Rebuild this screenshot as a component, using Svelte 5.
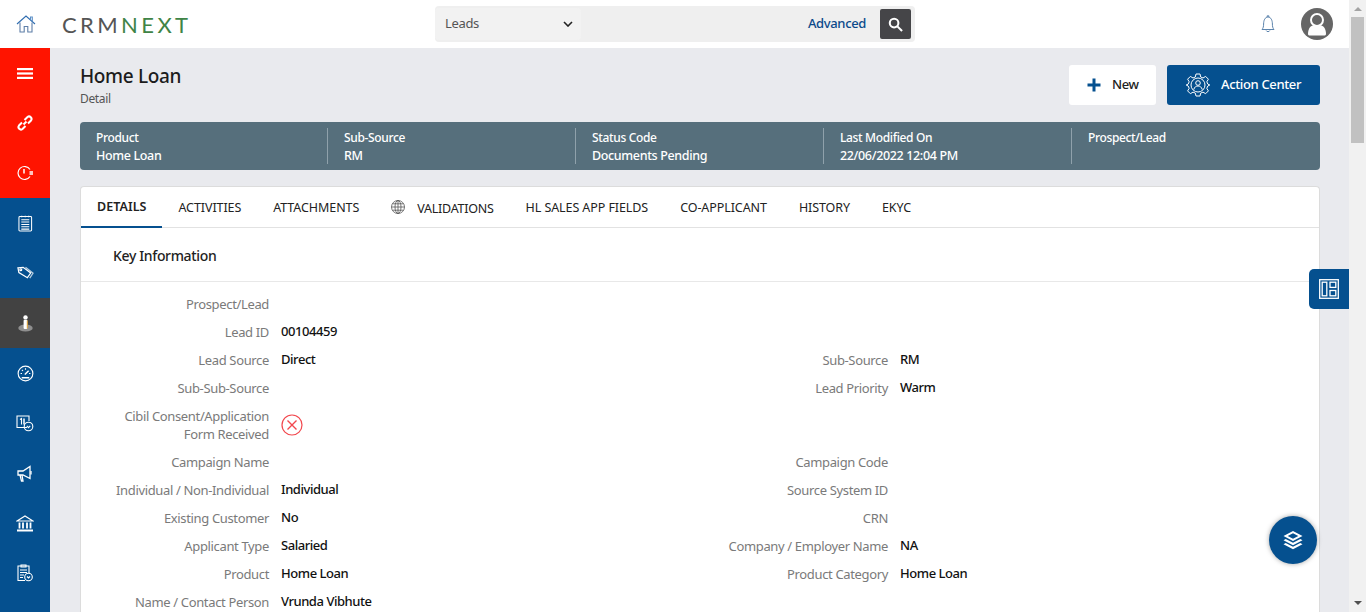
<script>
  const summary = [
    { label: 'Product', value: 'Home Loan' },
    { label: 'Sub-Source', value: 'RM' },
    { label: 'Status Code', value: 'Documents Pending' },
    { label: 'Last Modified On', value: '22/06/2022 12:04 PM' },
    { label: 'Prospect/Lead', value: '' },
  ]
  const tabs = ['DETAILS', 'ACTIVITIES', 'ATTACHMENTS', 'VALIDATIONS', 'HL SALES APP FIELDS', 'CO-APPLICANT', 'HISTORY', 'EKYC']
  const rows = [
    ['Prospect/Lead', '', '', ''],
    ['Lead ID', '00104459', '', ''],
    ['Lead Source', 'Direct', 'Sub-Source', 'RM'],
    ['Sub-Sub-Source', '', 'Lead Priority', 'Warm'],
    ['Cibil Consent/Application Form Received', 'x', '', ''],
    ['Campaign Name', '', 'Campaign Code', ''],
    ['Individual / Non-Individual', 'Individual', 'Source System ID', ''],
    ['Existing Customer', 'No', 'CRN', ''],
    ['Applicant Type', 'Salaried', 'Company / Employer Name', 'NA'],
    ['Product', 'Home Loan', 'Product Category', 'Home Loan'],
    ['Name / Contact Person', 'Vrunda Vibhute', '', ''],
  ]
  const nav = ['menu', 'link', 'alarm', 'notes', 'tag', 'person', 'gauge', 'calendar', 'megaphone', 'bank', 'report']
</script>

<div class="page">
  <div class="viewport">
    <header class="topbar">
      <div class="brand">
        <svg class="home" viewBox="0 0 20 20" width="20" height="20" fill="none" stroke="#2f6db0" stroke-width="1.1">
          <path d="M1 10 L10 2 L19 10" />
          <path d="M14.5 5.5V3h1.8v4.2" stroke="#5b8fc7" />
          <path d="M4 8.5V18h4.2v-5.5h3.6V18H16V8.5" stroke="#5f7fa8" />
        </svg>
        <div class="logo">CRM<span>NEXT</span></div>
      </div>
      <div class="search">
        <div class="module">
          <span>Leads</span>
          <svg viewBox="0 0 10 6" width="10" height="6" fill="none" stroke="#222" stroke-width="1.6"><path d="M1 1l4 4 4-4" /></svg>
        </div>
        <span class="advanced">Advanced</span>
        <button class="go" type="button" aria-label="Search">
          <svg viewBox="0 0 16 16" width="15" height="15" fill="none" stroke="#fff" stroke-width="2.2"><circle cx="6.5" cy="6.5" r="4.6" /><path d="M10 10l5 5" /></svg>
        </button>
      </div>
      <div class="user">
        <svg viewBox="0 0 18 20" width="18" height="20" fill="none" stroke="#5c84ad" stroke-width="1">
          <path d="M3 15.5c1.2-1.4 1.6-3 1.6-5.5C4.600 6.500 6 3 9 3s4.400 3.500 4.400 7c0 2.500.4 4.100 1.600 5.500z" />
          <path d="M7.200 16.500c.4 1.500 3.200 1.500 3.600 0" />
          <path d="M8.200 3V1.800h1.600V3" />
        </svg>
        <svg viewBox="0 0 32 32" width="32" height="32">
          <circle cx="16" cy="16" r="16" fill="#666" />
          <circle cx="16" cy="12" r="6" fill="none" stroke="#fff" stroke-width="2" />
          <path d="M7 26c0-6 3-8.500 5.500-8.500h7C22 17.500 25 20 25 26c0 1-1 1.500-2 1.500H9C8 27.500 7 27 7 26z" fill="#fff" />
        </svg>
      </div>
    </header>

    <div class="body">
      <nav class="sidebar">
        {#each nav as item, i}
          <div class="nav-item" class:red={i < 3} class:active={item === 'person'}>
            {#if item === 'menu'}
              <svg viewBox="0 0 16 11" width="16" height="11" fill="#fff"><rect y="0" width="16" height="2.200" /><rect y="4.400" width="16" height="2.200" /><rect y="8.800" width="16" height="2.200" /></svg>
            {:else if item === 'link'}
              <svg viewBox="0 0 18 18" width="18" height="18" fill="none" stroke="#fff" stroke-width="2"><path d="M7.500 10.500l3-3" /><path d="M6 8.500L3 11.500a2.500 2.500 0 0 0 3.500 3.500l3-3" /><path d="M12 9.500l3-3A2.500 2.500 0 0 0 11.500 3l-3 3" /></svg>
            {:else if item === 'alarm'}
              <svg viewBox="0 0 18 16" width="18" height="16" fill="none" stroke="#fff" stroke-width="1.200"><path d="M14 11.500A6.500 6.500 0 1 1 14 4.500" /><path d="M8 4v4.500" stroke-width="1.500" /><rect x="13.500" y="6" width="3.500" height="4" fill="#fff" stroke="none" opacity=".75" /></svg>
            {:else if item === 'notes'}
              <svg viewBox="0 0 16 18" width="15" height="17" fill="none" stroke="#fff" stroke-width="1.100"><rect x="1" y="1.500" width="13.500" height="15.500" rx="1" /><path d="M4 .8v1.500M7.700 .8v1.500M11.400 .8v1.500" /><path d="M3.500 5h8.500M3.500 7.500h8.500M3.500 10h8.500M3.500 12.500h8.500M3.500 15h8.500" /></svg>
            {:else if item === 'tag'}
              <svg viewBox="0 0 18 14" width="17" height="14" fill="none" stroke="#fff" stroke-width="1.300"><path d="M1 1.500L6.500 1 14.500 7 11 12 2 6.500z" /><circle cx="4" cy="3.500" r="1" /><path d="M9 1l8 6.200-3.500 5.300" stroke-opacity=".7" /></svg>
            {:else if item === 'person'}
              <svg viewBox="0 0 15 17" width="15" height="17"><ellipse cx="7.500" cy="13" rx="7.200" ry="3.600" fill="#8f8f8f" /><circle cx="7.500" cy="2.400" r="2.200" fill="#fff" /><rect x="5.600" y="4.800" width="3.800" height="9.200" rx="1" fill="#fff" /><rect x="8.800" y="5.500" width="1" height="8" fill="#e0a030" /></svg>
            {:else if item === 'gauge'}
              <svg viewBox="0 0 18 18" width="17" height="17" fill="none" stroke="#fff" stroke-width="1.200"><circle cx="9" cy="9" r="7.800" /><path d="M9 3.500v1.500M3.800 9h1.500M12.700 9h1.500M5.300 5.300l1 1" /><path d="M8.300 10l4-4" stroke-width="1.500" /><path d="M5 13.500h8" stroke-width="1.600" /></svg>
            {:else if item === 'calendar'}
              <svg viewBox="0 0 18 17" width="18" height="17" fill="none" stroke="#fff" stroke-width="1.100"><path d="M11 12.500H1V1h12v5" /><path d="M4 4.500l1.500-1v6" /><path d="M8 3.500v6" stroke-width="1.500" /><circle cx="12.500" cy="11.500" r="4.300" /><path d="M10.800 10.800l1.700 1.800 1.700-1.800" /></svg>
            {:else if item === 'megaphone'}
              <svg viewBox="0 0 16 17" width="16" height="17" fill="none" stroke="#fff" stroke-width="1.300"><path d="M1 6h5l7-4.500v12L6 10H1z" /><path d="M3 10l1.500 6H6l-1-6" /><path d="M14 6v3.500" /></svg>
            {:else if item === 'bank'}
              <svg viewBox="0 0 18 17" width="18" height="17" fill="none" stroke="#fff" stroke-width="1.200"><path d="M1 6L9 1l8 5z" /><path d="M3.500 7.500v6M7 7.500v6M11 7.500v6M14.500 7.500v6" stroke-width="1.800" /><path d="M1 15.500h16" stroke-width="2" /></svg>
            {:else}
              <svg viewBox="0 0 16 18" width="16" height="18" fill="none" stroke="#fff" stroke-width="1.100"><path d="M8 16.500H1V2h11v7" /><path d="M4 1v2h5V1z" /><path d="M3 6h7M3 8.500h7M3 11h4M3 13.500h3" /><circle cx="11.500" cy="13" r="3.800" /><path d="M10 12.500l1.500 1.500 1.500-1.500" /></svg>
            {/if}
          </div>
        {/each}
      </nav>

      <main class="content">
        <div class="title-row">
          <div>
            <h1>Home Loan</h1>
            <p>Detail</p>
          </div>
          <div class="actions">
            <button class="new" type="button">
              <svg viewBox="0 0 14 14" width="14" height="14" fill="#05508f"><rect x="5.500" y="0.500" width="3" height="13" /><rect x="0.500" y="5.500" width="13" height="3" /></svg>
              <span>New</span>
            </button>
            <button class="center" type="button">
              <svg viewBox="0 0 24 24" width="24" height="24" fill="none" stroke="#fff" stroke-width="1">
                <path d="M10 1h4l.7 3 2.300 1 2.600-1.600 2.800 2.800L20.800 8.800l1 2.300 2 .9v0l-2 1-1 2.300 1.600 2.600-2.800 2.800-2.600-1.600-2.300 1-.7 2.900h-4l-.7-2.900-2.300-1-2.600 1.600-2.800-2.800 1.600-2.600-1-2.300-2-1 2-.9 1-2.300L1.600 6.200l2.800-2.800L7 5l2.300-1z" />
                <circle cx="12" cy="12" r="7" />
                <circle cx="12" cy="10" r="2.300" />
                <path d="M7.800 16.500c.6-2.500 2.300-3.500 4.200-3.500s3.600 1 4.200 3.500" />
              </svg>
              <span>Action Center</span>
            </button>
          </div>
        </div>

        <section class="strip">
          {#each summary as cell}
            <div class="cell">
              <span class="cell-label">{cell.label}</span>
              <span class="cell-value">{cell.value}</span>
            </div>
          {/each}
        </section>

        <section class="card">
          <div class="tabs">
            {#each tabs as tab, i}
              <div class="tab" class:current={i === 0}>
                {#if tab === 'VALIDATIONS'}
                  <svg viewBox="0 0 14 14" width="14" height="14" fill="none" stroke="#555" stroke-width=".8"><circle cx="7" cy="7" r="6.500" /><ellipse cx="7" cy="7" rx="3" ry="6.500" /><path d="M7 .5v13M.5 7h13M1.500 3.800h11M1.500 10.200h11" /></svg>
                  <span class="low">{tab}</span>
                {:else}
                  <span>{tab}</span>
                {/if}
              </div>
            {/each}
          </div>
          <h2>Key Information</h2>
          <div class="fields">
            {#each rows as row}
              <div class="field">
                <div class="label">{row[0]}</div>
                <div class="value">
                  {#if row[1] === 'x'}
                    <svg viewBox="0 0 22 22" width="22" height="22" fill="none" stroke="#f2474d" stroke-width="1.200"><circle cx="11" cy="11" r="10" /><path d="M6.500 6.500l9 9M15.500 6.500l-9 9" stroke-width="1.400" /></svg>
                  {:else}
                    <span>{row[1]}</span>
                  {/if}
                </div>
              </div>
              <div class="field">
                <div class="label">{row[2]}</div>
                <div class="value"><span>{row[3]}</span></div>
              </div>
            {/each}
          </div>
        </section>
      </main>
    </div>

    <button class="layout-tab" type="button" aria-label="Layout">
      <svg viewBox="0 0 20 20" width="20" height="20" fill="none" stroke="#fff" stroke-width="1.300"><rect x=".7" y=".7" width="18.600" height="18.600" /><rect x="3.200" y="3.200" width="4.600" height="13.600" /><rect x="11" y="3.200" width="5.800" height="5.200" /><rect x="11" y="11.500" width="5.800" height="5.300" /></svg>
    </button>
    <button class="layers" type="button" aria-label="Layers">
      <svg viewBox="0 0 22 20" width="22" height="20" fill="#fff">
        <path d="M11 1l9.500 5L11 11 1.500 6zM11 3.200L5.700 6 11 8.800 16.300 6z" fill-rule="evenodd" />
        <path d="M3.700 9L1.500 10.200 11 15.200l9.500-5L18.300 9 11 12.800z" />
        <path d="M3.700 13L1.500 14.200 11 19.200l9.500-5L18.300 13 11 16.800z" />
      </svg>
    </button>
  </div>

  <div class="scrollbar">
    <div class="arrow up"></div>
    <div class="thumb"></div>
    <div class="arrow down"></div>
  </div>
</div>

<style>
  :global(body) {
    margin: 0;
    overflow: hidden;
  }

  .page {
    display: flex;
    width: 1366px;
    height: 612px;
    overflow: hidden;
    font-family: 'Noto Sans', 'Liberation Sans', sans-serif;
    font-size: 13px;
    letter-spacing: -0.35px;
    color: #111;
  }

  .viewport {
    position: relative;
    flex: 1;
    min-width: 0;
    display: flex;
    flex-direction: column;
  }

  .topbar {
    flex: none;
    height: 48px;
    display: grid;
    grid-template-columns: 435px 480px 1fr;
    align-items: center;
    background: #fff;
  }

  .brand {
    display: flex;
    align-items: center;
    padding-left: 16px;
    gap: 26px;
  }

  .logo {
    font-family: Lato, sans-serif;
    font-size: 22px;
    letter-spacing: 3.4px;
    color: #555;
  }

  .logo span {
    color: #3f8446;
  }

  .search {
    height: 36px;
    display: flex;
    align-items: center;
    background: #efefef;
    border-radius: 4px;
  }

  .module {
    width: 146px;
    height: 32px;
    box-sizing: border-box;
    padding: 0 8px 0 10px;
    display: flex;
    align-items: center;
    justify-content: space-between;
    background: #f2f2f2;
    border-radius: 4px;
    color: #555;
  }

  .module span {
    padding-bottom: 2px;
  }

  .advanced {
    margin-left: auto;
    margin-right: 14px;
    padding-bottom: 2px;
    color: #0b4a8a;
    font-weight: 500;
  }

  .go {
    width: 31px;
    height: 30px;
    margin-right: 4px;
    padding: 0;
    display: grid;
    place-items: center;
    border: 0;
    border-radius: 2px;
    background: #454548;
  }

  .user {
    display: flex;
    align-items: center;
    justify-content: flex-end;
    gap: 24px;
    padding-right: 16px;
  }

  .body {
    flex: 1;
    min-height: 0;
    display: flex;
  }

  .sidebar {
    flex: none;
    width: 50px;
    background: #05508f;
  }

  .nav-item {
    height: 50px;
    display: grid;
    place-items: center;
  }

  .nav-item.red {
    background: #ff1400;
  }

  .nav-item.active {
    background: #424242;
  }

  .content {
    flex: 1;
    min-width: 0;
    box-sizing: border-box;
    padding: 17px 29px 0 30px;
    overflow: hidden;
    background: #e9eaee;
  }

  .title-row {
    display: flex;
    justify-content: space-between;
    height: 57px;
  }

  h1 {
    margin: 0;
    font-size: 19px;
    line-height: 22px;
    font-weight: 500;
    color: #1c1c1c;
  }

  .title-row p {
    margin: 3px 0 0;
    font-size: 12px;
    line-height: 17px;
    color: #555;
  }

  .actions {
    display: flex;
    gap: 11px;
  }

  .actions button {
    height: 40px;
    display: flex;
    align-items: center;
    border: 0;
    border-radius: 3px;
    font: inherit;
    letter-spacing: inherit;
    font-weight: 500;
  }

  .actions button span {
    padding-bottom: 2px;
  }

  .new {
    width: 87px;
    padding: 0 0 0 18px;
    gap: 11px;
    background: #fff;
    color: #222;
  }

  .center {
    width: 153px;
    padding: 0 0 0 19px;
    gap: 11px;
    background: #05508f;
    color: #fff;
  }

  .strip {
    height: 48px;
    display: grid;
    grid-template-columns: repeat(5, 1fr);
    align-items: center;
    border-radius: 4px;
    background: #566f7c;
    color: #fff;
  }

  .cell {
    height: 36px;
    box-sizing: border-box;
    padding: 1px 0 0 16px;
    display: flex;
    flex-direction: column;
    border-right: 1px solid #8fa1ab;
    line-height: 18px;
  }

  .cell:last-child {
    border-right: 0;
  }

  .cell-label,
  .cell-value {
    min-height: 18px;
    font-size: 12.500px;
    font-weight: 500;
  }

  .cell-label {
    font-size: 12px;
  }

  .card {
    margin-top: 16px;
    background: #fff;
    border: 1px solid #dcdcdc;
    border-bottom: 0;
    border-radius: 4px 4px 0 0;
  }

  .tabs {
    height: 40px;
    display: flex;
    border-bottom: 1px solid #e2e2e2;
  }

  .tab {
    height: 40px;
    padding: 0 16px;
    display: flex;
    align-items: center;
    gap: 12px;
    color: #222;
    font-size: 12.500px;
    letter-spacing: -0.08px;
    box-sizing: border-box;
  }

  .tab .low {
    padding-top: 2px;
    letter-spacing: -0.25px;
  }

  .tab.current {
    font-weight: 600;
    letter-spacing: 0.05px;
    border-bottom: 2px solid #05508f;
    height: 41px;
  }

  h2 {
    margin: 0;
    height: 54px;
    box-sizing: border-box;
    padding-left: 32px;
    line-height: 55px;
    font-size: 14px;
    font-weight: 500;
    color: #222;
    border-bottom: 1px solid #e8e8e8;
  }

  .fields {
    padding-top: 8px;
    display: grid;
    grid-template-columns: 619px 1fr;
    grid-auto-rows: minmax(28px, auto);
  }

  .field {
    display: grid;
    grid-template-columns: 188px 1fr;
    gap: 12px;
    align-items: center;
  }

  .label {
    padding: 5px 0 5px 20px;
    text-align: right;
    color: #7a7a7a;
    line-height: 18px;
  }

  .value {
    display: flex;
    align-items: center;
    font-weight: 500;
    letter-spacing: -0.45px;
    color: #111;
  }

  .value span {
    padding-bottom: 2px;
  }

  .layout-tab {
    position: absolute;
    top: 269px;
    right: 0;
    width: 40px;
    height: 40px;
    padding: 0;
    display: grid;
    place-items: center;
    border: 0;
    border-radius: 5px 0 0 5px;
    background: #05508f;
  }

  .layers {
    position: absolute;
    top: 516px;
    left: 1269px;
    width: 48px;
    height: 48px;
    padding: 0;
    display: grid;
    place-items: center;
    border: 0;
    border-radius: 50%;
    background: #05508f;
    box-shadow: 0 0 5px rgba(0, 0, 0, 0.35);
  }

  .scrollbar {
    flex: none;
    width: 17px;
    display: flex;
    flex-direction: column;
    align-items: center;
    background: #f1f1f1;
  }

  .arrow {
    flex: none;
    width: 0;
    height: 0;
    border-left: 4px solid transparent;
    border-right: 4px solid transparent;
  }

  .arrow.up {
    margin: 7px 0 6px;
    border-bottom: 4px solid #a3a3a3;
  }

  .arrow.down {
    margin-top: auto;
    margin-bottom: 7px;
    border-top: 4px solid #505050;
  }

  .thumb {
    width: 13px;
    height: 126px;
    background: #c1c1c1;
  }
</style>
